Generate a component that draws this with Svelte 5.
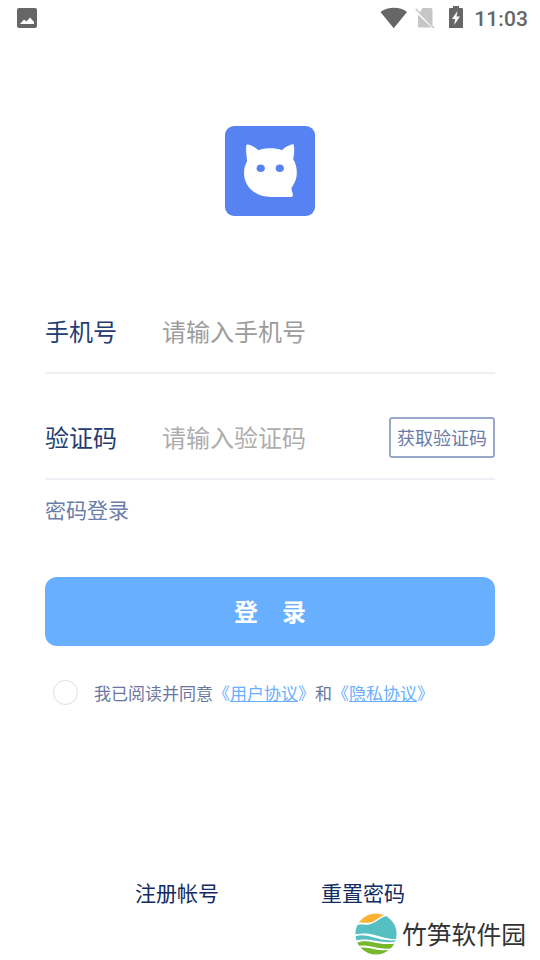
<script>
    let phone = $state("")
    let code = $state("")
    let agreed = $state(false)
</script>

<main class="screen">
    <header class="status">
        <svg class="picture" width="20" height="20" viewBox="0 0 20 20">
            <path fill="#666" fill-rule="evenodd" d="M2 0h16a2 2 0 0 1 2 2v16a2 2 0 0 1-2 2H2a2 2 0 0 1-2-2V2a2 2 0 0 1 2-2zM3 16h14v-2l-4-4.500-3.500 4L7 11.500z"/>
        </svg>

        <div class="status_right">
            <svg width="28" height="22" viewBox="0 0 28 22">
                <path fill="#666" d="M.5 5C4.500 2 9 .7 14 .7S23.500 2 27 5L13.700 21.300z"/>
            </svg>
            <svg class="sim" width="20" height="22" viewBox="0 0 20 22">
                <path fill="#c6c6c6" d="M7.500 1H15.500a2 2 0 0 1 2 2v15.500L5 5.500zM3 7.500 16.500 20.500H4.500a1.500 1.500 0 0 1-1.500-1.500z"/>
                <path stroke="#c6c6c6" stroke-width="1.500" d="M.7 1.800 19 21"/>
            </svg>
            <svg class="battery" width="14" height="22" viewBox="0 0 14 22">
                <path fill="#666" d="M4 0h6v2h3a1 1 0 0 1 1 1V22H0V3a1 1 0 0 1 1-1h3z"/>
                <path fill="#fff" d="M8.500 5 3 13h3.200l-1 6L11 10.500H7.500z"/>
            </svg>
            <span class="time">11:03</span>
        </div>
    </header>

    <div class="logo">
        <svg width="90" height="90" viewBox="0 0 90 90">
            <path fill="#fff" d="M23 18.500c4 .8 7.500 3.200 10.500 5.700 7.500-2.600 16-2.600 23.500 0 3-2.900 7-5.400 11.500-6.200 1.200 4.500.9 10-.3 15.300C70.500 37 71.800 41 71.800 46.500c0 6.500-1.900 10.200-4.800 14.500-1.700 3 1.500 5.500.8 8.500-.3 1-.9 1.500-2 1.500H46C30 71 19 60.500 19 47c0-4.500 1.200-8.700 3.200-12-1-5.500-1.500-13.500-.7-16 .3-.5.800-.6 1.500-.5z"/>
            <ellipse fill="#5683f1" cx="35.700" cy="42.200" rx="4.100" ry="3.800"/>
            <ellipse fill="#5683f1" cx="54.800" cy="42.200" rx="4.100" ry="3.800"/>
        </svg>
    </div>

    <form class="form" onsubmit={(e) => e.preventDefault()}>
        <label class="row">
            <span>手机号</span>
            <input class="phone" type="tel" bind:value={phone} placeholder="请输入手机号">
        </label>
        <div class="row">
            <label for="code">验证码</label>
            <input id="code" type="text" bind:value={code} placeholder="请输入验证码">
            <button class="get_code" type="button">获取验证码</button>
        </div>

        <a class="switch" href="#password">密码登录</a>

        <button class="login" type="submit">登　录</button>

        <label class="agree">
            <input type="checkbox" bind:checked={agreed}>
            <span>我已阅读并同意<b>《<u>用户协议</u>》</b>和<b>《<u>隐私协议</u>》</b></span>
        </label>
    </form>

    <nav class="links">
        <a href="#register">注册帐号</a>
        <a href="#reset">重置密码</a>
    </nav>

    <footer class="brand">
        <svg width="42" height="42" viewBox="0 0 42 42">
            <defs>
                <clipPath id="round"><circle cx="21" cy="21" r="20.600"/></clipPath>
            </defs>
            <g clip-path="url(#round)">
                <path fill="#f9b233" d="M0 0h32L28.500 2.500C22 5 20 9.500 13 9.800 9.500 10 7.500 8.800 3 10z"/>
                <path fill="#56bfc1" d="M0 13.500C5 10 9 12.500 14 11.500 21 10 24 5 31 3l11-1v24C32 26.500 26 23.500 19 21.800 12 20 6 20 0 21.500z"/>
                <path fill="#56bfc1" d="M0 23.500c6-2 11-1.200 17 .6 9 2.600 16 4 25 3v1.300c-8 1.400-14 .6-20-.4C14 26.500 8 25.500 0 27.800z"/>
                <path fill="#75b82b" d="M1 30.300c6-2.800 11-2.300 17-1 8 1.800 14 2.400 24 .9l-2 5c-8 1-14 .4-21-1.200C13 32.700 8 31.800 1 33z"/>
                <path fill="#75b82b" d="M3 35c6-1.200 11 0 16 1.200 6 1.300 11 1.600 18 .3L30 42H9z"/>
            </g>
        </svg>
        <span>竹笋软件园</span>
    </footer>
</main>

<style>
:global(body) {
    background: #fff;
}

.screen {
    width: 540px;
    height: 960px;
    box-sizing: border-box;
    display: flex;
    flex-direction: column;
    overflow: hidden;
    font-family: "Noto Sans CJK SC", sans-serif;
}

.screen svg {
    display: block;
}

a {
    text-decoration: none;
}

button, input {
    font-family: inherit;
    margin: 0;
    padding: 0;
}

.status {
    height: 36px;
    display: flex;
    align-items: center;
    justify-content: space-between;
    padding: 0 12px 0 17px;
}

.status_right {
    display: flex;
    align-items: center;
}

.sim {
    margin-left: 7px;
}

.battery {
    margin: 0 11px 2px 14px;
}

.time {
    font: 500 21px/24px Roboto, sans-serif;
    letter-spacing: 0.1px;
    color: #666;
    padding-top: 2px;
}

.logo {
    align-self: center;
    width: 90px;
    height: 90px;
    margin-top: 90px;
    border-radius: 9px;
    background: #5683f1;
}

.form {
    display: flex;
    flex-direction: column;
    margin-top: 74px;
    padding: 0 45px;
}

.row {
    height: 80px;
    display: flex;
    align-items: center;
    padding-bottom: 2px;
    border-bottom: 2px solid #edf1f5;
    font-size: 24px;
    color: #253c70;
}

.row + .row {
    margin-top: 22px;
}

.row > :first-child {
    width: 117px;
    flex: none;
}

.row input {
    flex: 1;
    min-width: 0;
    height: 40px;
    border: none;
    outline: none;
    background: none;
    font-size: 24px;
    color: #253c70;
}

.row input::placeholder {
    color: #adadad;
    opacity: 1;
}

.row .phone::placeholder {
    color: #9c9c9c;
}

.get_code {
    width: 106px;
    height: 41px;
    margin-top: 2px;
    border: 2px solid #99a8cb;
    border-radius: 3px;
    background: #fff;
    font-size: 18px;
    color: #6b7ba8;
}

.switch {
    align-self: flex-start;
    margin-top: 13px;
    font-size: 21px;
    line-height: 32px;
    color: #6b7da9;
}

.login {
    height: 69px;
    margin-top: 52px;
    padding-bottom: 2px;
    border: none;
    border-radius: 12px;
    background: #69afff;
    font-size: 24px;
    font-weight: bold;
    color: #fff;
}

.agree {
    display: flex;
    align-items: center;
    margin-top: 34px;
    padding-left: 8px;
    font-size: 17px;
    line-height: 25px;
    color: #6b77a0;
}

.agree input {
    appearance: none;
    width: 25px;
    height: 25px;
    margin-right: 16px;
    border: 1px solid #dedede;
    border-radius: 50%;
}

.agree input:checked {
    background: #69afff;
}

.agree b {
    font-weight: normal;
    color: #69afff;
}

.links {
    display: flex;
    justify-content: center;
    gap: 102px;
    margin-top: 171px;
    font-size: 21px;
    line-height: 32px;
}

.links a {
    color: #122b60;
}

.brand {
    display: flex;
    align-items: center;
    align-self: flex-end;
    gap: 5px;
    margin-top: 5px;
    padding-right: 14px;
    font-size: 24.800px;
    line-height: 42px;
    color: #333;
}

.brand span {
    margin-top: -2px;
}
</style>
